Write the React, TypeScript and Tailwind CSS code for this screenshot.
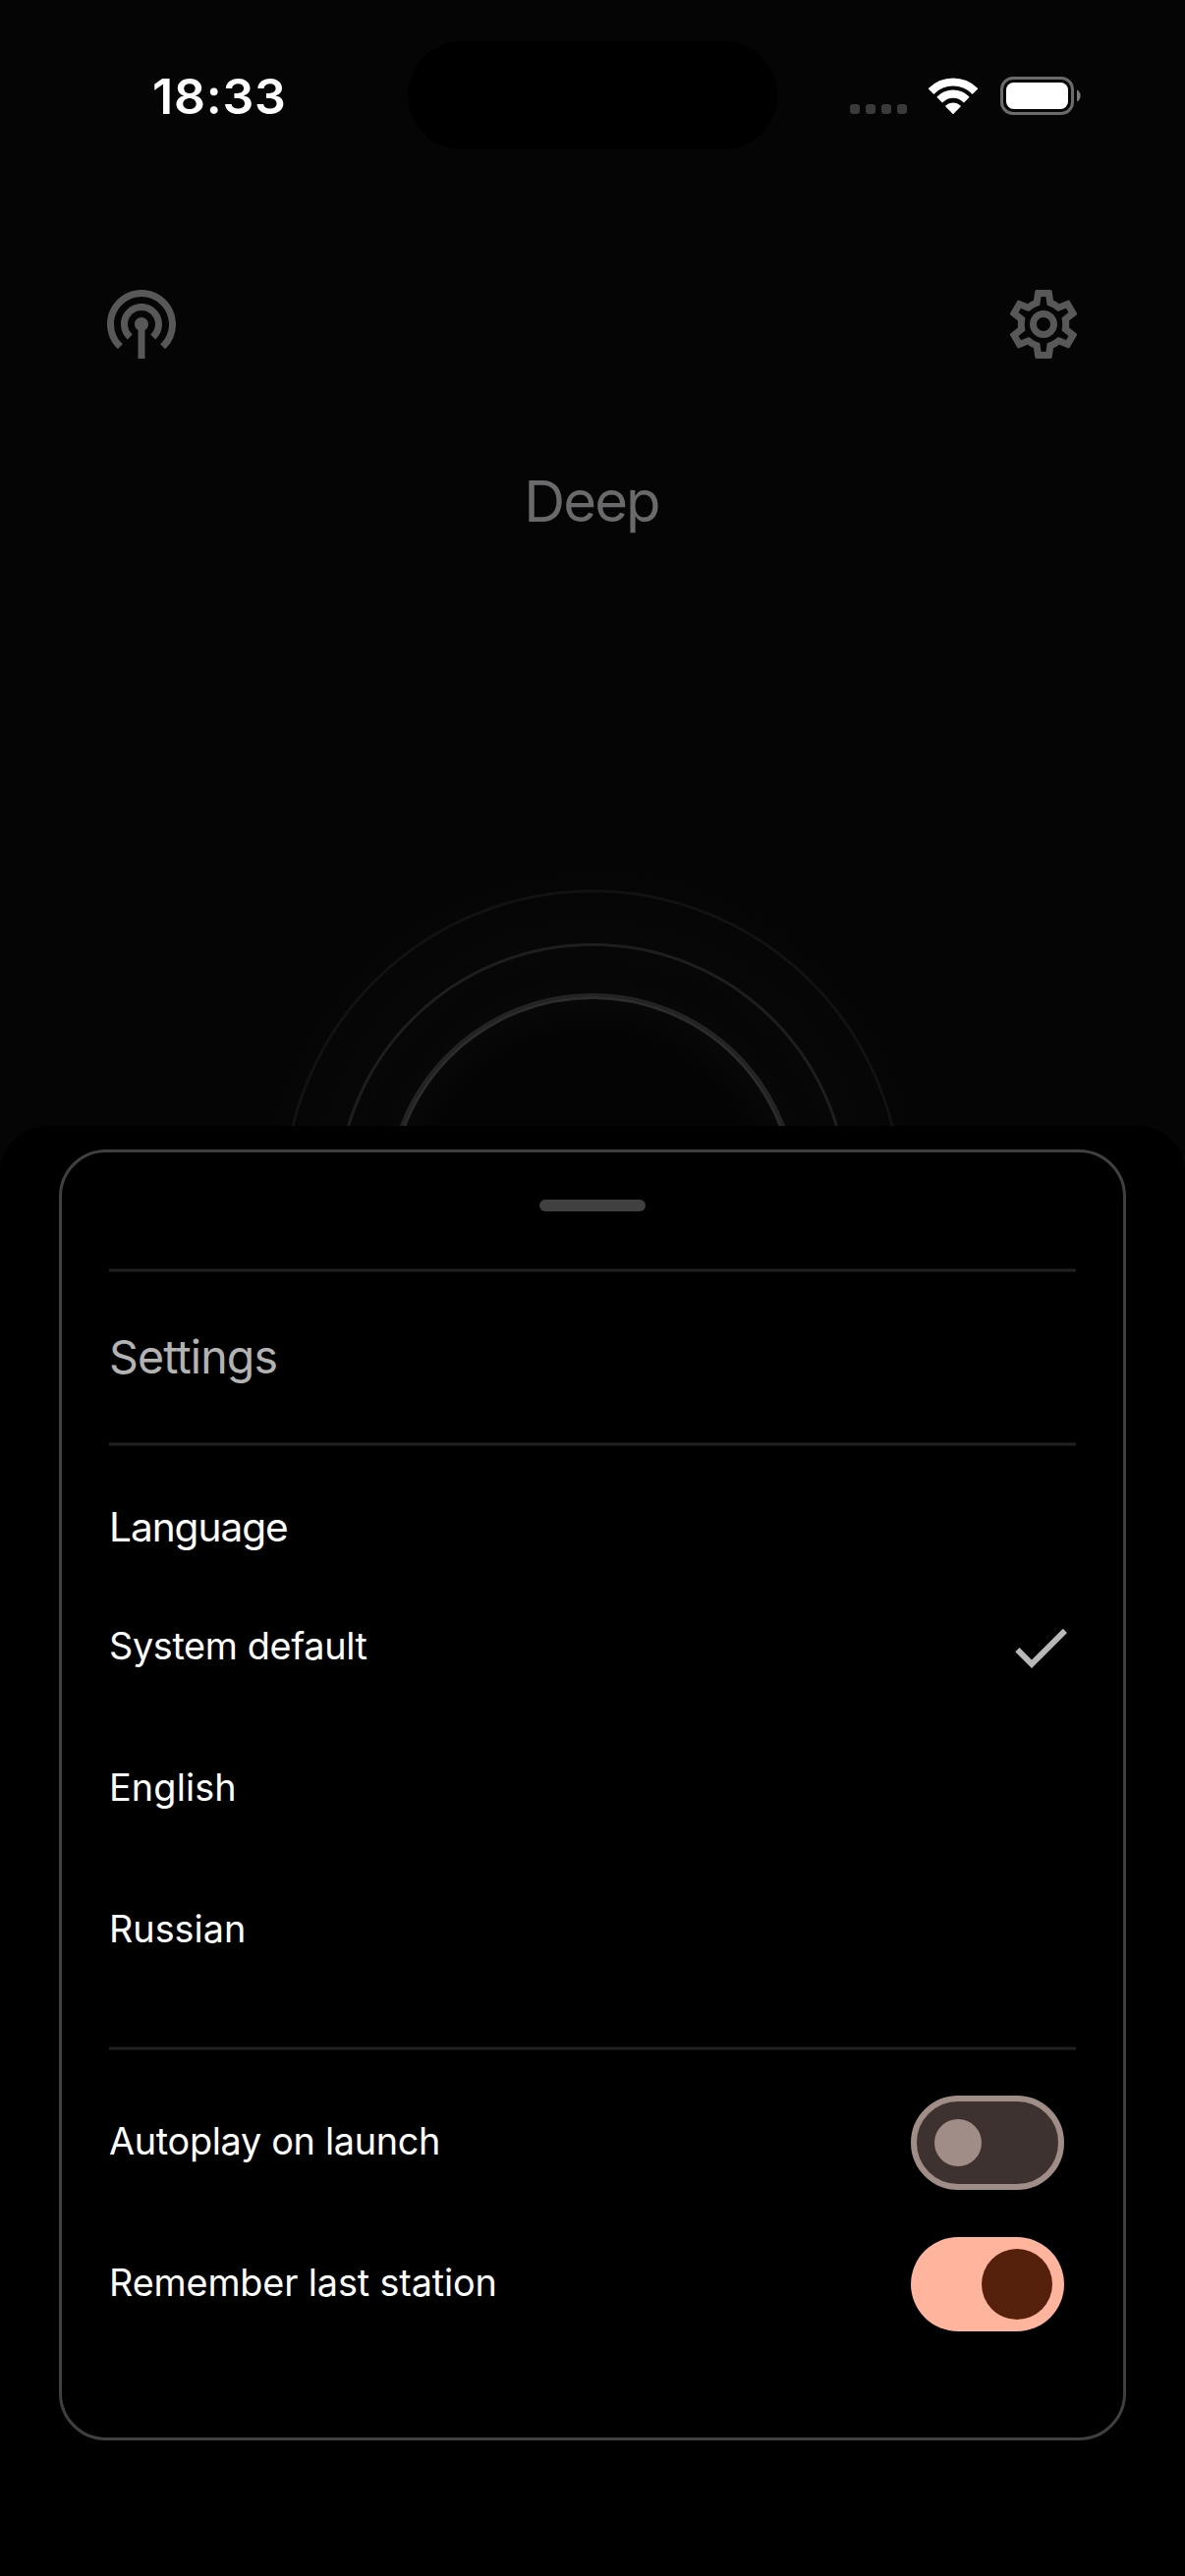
import { MdCheck, MdOutlineSettings } from 'react-icons/md';

function WifiIcon() {
  return (
    <svg width="52" height="38" viewBox="0 0 52 38" fill="#fff" stroke="#fff" strokeWidth="1.5" strokeLinejoin="round">
      <path d="M1.6 11.3A34.6 34.6 0 0 1 50.4 11.3L45.6 15.9A27.8 27.8 0 0 0 6.4 15.9Z" />
      <path d="M10.3 19.8A22 22 0 0 1 41.7 19.8L36.8 24.6A15 15 0 0 0 15.2 24.6Z" />
      <path d="M18.9 29A10.5 10.5 0 0 1 33.1 29L26 36.3Z" />
    </svg>
  );
}

function BatteryIcon() {
  return (
    <svg width="83" height="39" viewBox="0 0 83 39" fill="none">
      <rect x="1.5" y="1.5" width="72" height="36" rx="11.5" stroke="#6b6b6b" strokeWidth="3" />
      <rect x="6" y="6" width="63" height="27" rx="7.5" fill="#fff" />
      <path d="M78 13.5a6.8 6.8 0 0 1 0 12Z" fill="#7a7a7a" />
    </svg>
  );
}

function PodcastIcon() {
  return (
    <svg width="84" height="84" viewBox="0 0 24 24" fill="#585858">
      <path d="M14 12c0 .74-.4 1.38-1 1.72V22h-2v-8.28c-.6-.35-1-.98-1-1.72 0-1.1.9-2 2-2s2 .9 2 2zm-2-6c-3.31 0-6 2.69-6 6 0 1.74.75 3.31 1.94 4.4l1.42-1.42A3.957 3.957 0 0 1 8 12c0-2.21 1.79-4 4-4s4 1.79 4 4c0 1.19-.53 2.25-1.36 2.98l1.42 1.42A5.957 5.957 0 0 0 18 12c0-3.31-2.69-6-6-6zm0-4C6.48 2 2 6.48 2 12c0 2.85 1.2 5.41 3.11 7.24l1.42-1.42A7.987 7.987 0 0 1 4 12c0-4.41 3.59-8 8-8s8 3.59 8 8c0 2.29-.97 4.36-2.53 5.82l1.42 1.42A9.94 9.94 0 0 0 22 12c0-5.52-4.48-10-10-10z" />
    </svg>
  );
}

function Rings() {
  return (
    <svg className="shrink-0" width="720" height="720" viewBox="-360 -360 720 720" fill="none">
      <defs>
        <radialGradient id="halo" gradientUnits="userSpaceOnUse" cx="0" cy="0" r="350">
          <stop offset="0" stopColor="#040404" />
          <stop offset="0.48" stopColor="#040404" />
          <stop offset="0.59" stopColor="#080808" />
          <stop offset="0.65" stopColor="#060606" />
          <stop offset="0.74" stopColor="#070707" />
          <stop offset="0.9" stopColor="#060606" />
          <stop offset="1" stopColor="#050505" />
        </radialGradient>
      </defs>
      <circle r="350" fill="url(#halo)" />
      <circle r="314" stroke="#121212" strokeWidth="3" />
      <circle r="259.5" stroke="#1e1e1e" strokeWidth="3" />
      <circle r="208.5" stroke="#242424" strokeWidth="3" />
      <circle r="205.5" stroke="#2c2c2c" strokeWidth="3" />
    </svg>
  );
}

function Divider() {
  return <div className="h-1 border-y border-[#121212] bg-[#202020]" />;
}

function Switch({ on }: { on: boolean }) {
  return on ? (
    <div className="flex h-24 w-[156px] items-center justify-end rounded-full bg-[#ffb59d] pr-3">
      <div className="size-[72px] rounded-full bg-[#55200c]" />
    </div>
  ) : (
    <div className="flex h-24 w-[156px] items-center rounded-full border-6 border-[#a08d87] bg-[#3d322f] pl-[18px]">
      <div className="size-12 rounded-full bg-[#a08d87]" />
    </div>
  );
}

const languages = [
  { name: 'System default', tracking: 'tracking-[-0.35px]', selected: true },
  { name: 'English', tracking: 'tracking-[0.14px]', selected: false },
  { name: 'Russian', tracking: 'tracking-normal', selected: false },
];

const toggles = [
  { name: 'Autoplay on launch', tracking: 'tracking-[-0.3px]', on: false },
  { name: 'Remember last station', tracking: 'tracking-[-0.14px]', on: true },
];

export default function App() {
  return (
    <div className="relative flex h-[2622px] w-[1206px] flex-col overflow-hidden bg-[#050505] font-['Inter',sans-serif] text-white">
      <div className="flex h-[168px] shrink-0 pr-[105px] pl-[155px]">
        <div className="mt-[68px] w-[260px] text-[50px] leading-[60px] font-semibold tracking-[0.77px]">18:33</div>
        <div className="mt-[42px] h-[110px] w-[376px] rounded-full bg-black" />
        <div className="mt-[78px] ml-auto flex h-[39px]">
          <div className="mt-7 flex gap-1.5">
            <div className="size-2.5 rounded-[3px] bg-[#3a3a3a]" />
            <div className="size-2.5 rounded-[3px] bg-[#3a3a3a]" />
            <div className="size-2.5 rounded-[3px] bg-[#3a3a3a]" />
            <div className="size-2.5 rounded-[3px] bg-[#3a3a3a]" />
          </div>
          <div className="ml-[21px] pt-px">
            <WifiIcon />
          </div>
          <div className="ml-[22px]">
            <BatteryIcon />
          </div>
        </div>
      </div>

      <div className="mt-[120px] flex shrink-0 justify-between px-[102px]">
        <PodcastIcon />
        <MdOutlineSettings size={84} color="#585858" />
      </div>
      <div className="mt-[103px] shrink-0 pr-0.5 text-center text-[58px] leading-[70px] tracking-[-1.9px] text-[#6b696c]">Deep</div>

      <div className="mt-[316px] flex shrink-0 justify-center">
        <Rings />
      </div>

      <div className="absolute inset-x-0 top-[1146px] bottom-0 rounded-t-[48px] bg-black px-15 pt-6">
        <div className="flex h-[1314px] flex-col rounded-[48px] border-3 border-[#404040] px-12 pt-12">
          <div className="h-3 w-[108px] self-center rounded-full bg-[#404040]" />
          <div className="mt-[58px]">
            <Divider />
          </div>
          <div className="pt-[58px] pb-[59px] text-[46.5px] leading-14 tracking-[-0.85px] text-[#b3b3b3]">Settings</div>
          <Divider />
          <div className="pt-[59px] pb-[26px] text-[40.6px] leading-12 tracking-[-1.04px]">Language</div>
          {languages.map((l) => (
            <div key={l.name} className="flex h-36 items-center justify-between">
              <span className={`pb-1 text-[37.8px] leading-12 ${l.tracking}`}>{l.name}</span>
              {l.selected && <MdCheck size={72} color="#b8b8b8" />}
            </div>
          ))}
          <div className="mt-[46px] mb-[22px]">
            <Divider />
          </div>
          {toggles.map((t) => (
            <div key={t.name} className="flex h-36 items-center justify-between pr-3">
              <span className={`pb-1 text-[37.8px] leading-12 ${t.tracking}`}>{t.name}</span>
              <Switch on={t.on} />
            </div>
          ))}
        </div>
      </div>
    </div>
  );
}
